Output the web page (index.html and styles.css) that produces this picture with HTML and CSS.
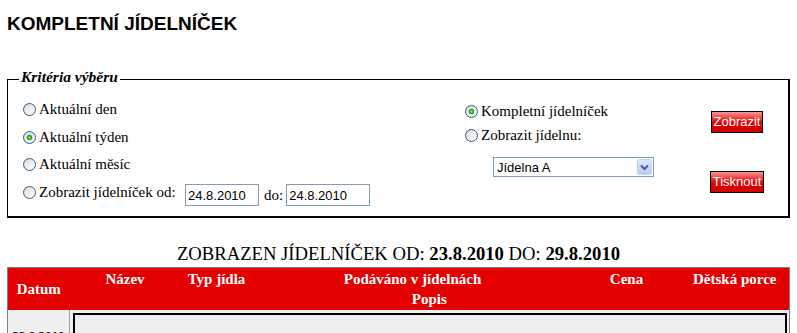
FILE: index.html
```html
<!DOCTYPE html>
<html lang="cs">
<head>
<meta charset="utf-8">
<title>Kompletní jídelníček</title>
<link rel="stylesheet" href="styles.css">
</head>
<body>
<div class="page">
  <h1 class="title">KOMPLETNÍ JÍDELNÍČEK</h1>
  <fieldset class="criteria">
    <legend class="criteria-legend">Kritéria výběru</legend>
    <div class="criteria-grid">
      <div class="col-period">
        <label class="row"><input type="radio" name="period" class="radio">Aktuální den</label>
        <label class="row"><input type="radio" name="period" class="radio" checked>Aktuální týden</label>
        <label class="row"><input type="radio" name="period" class="radio">Aktuální měsíc</label>
        <div class="row">
          <label class="range-label"><input type="radio" name="period" class="radio">Zobrazit jídelníček od:</label>
          <div class="range-inputs">
            <input type="text" class="date date-from" value="24.8.2010">
            <span class="range-do">do:</span>
            <input type="text" class="date date-to" value="24.8.2010">
          </div>
        </div>
      </div>
      <div class="col-place">
        <label class="row-sm"><input type="radio" name="place" class="radio" checked>Kompletní jídelníček</label>
        <label class="row-sm"><input type="radio" name="place" class="radio">Zobrazit jídelnu:</label>
        <div class="select-wrap">
          <select class="select"><option>Jídelna A</option></select>
          <span class="select-btn"><svg width="9" height="7" viewBox="0 0 9 7"><path d="M1 1.5 L4.5 5 L8 1.5" fill="none" stroke="#4d6185" stroke-width="2"/></svg></span>
        </div>
      </div>
      <div class="col-actions">
        <button type="button" class="btn btn-show">Zobrazit</button>
        <button type="button" class="btn btn-print">Tisknout</button>
      </div>
    </div>
  </fieldset>
  <h2 class="range-title">ZOBRAZEN JÍDELNÍČEK OD: <b>23.8.2010</b> DO: <b>29.8.2010</b></h2>
  <table class="menu">
    <colgroup>
      <col class="c-date"><col class="c-name"><col class="c-type"><col class="c-where"><col class="c-price"><col>
    </colgroup>
    <thead>
      <tr>
        <th rowspan="2" class="th-date">Datum</th>
        <th>Název</th>
        <th>Typ jídla</th>
        <th>Podáváno v jídelnách</th>
        <th>Cena</th>
        <th>Dětská porce</th>
      </tr>
      <tr><th colspan="5" class="th-desc">Popis</th></tr>
    </thead>
    <tbody>
      <tr>
        <td class="td-date">23.8.2010</td>
        <td colspan="5" class="td-day"><div class="day-box"></div></td>
      </tr>
    </tbody>
  </table>
</div>
</body>
</html>
```
FILE: styles.css
```css
html { overflow: hidden; }
body {
  margin: 0;
  background: #fff;
  color: #000;
  font-family: "Liberation Serif", "Times New Roman", serif;
  font-size: 15px;
}
.page { padding: 0 7px; }

.title {
  margin: 13px 0 0;
  font: bold 19px/22px "Liberation Sans", Arial, sans-serif;
}

.criteria {
  margin: 34px 0 0;
  padding: 4.5px 0 9.5px 11px;
  border: 1px solid #000;
  border-right-width: 2px;
  border-bottom-width: 2px;
  min-width: 0;
}
.criteria-legend {
  padding: 0 2px 4.5px;
  font: italic bold 15.5px/16px "Liberation Serif", serif;
}
.criteria-grid {
  display: grid;
  grid-template-columns: 442px 234px 76px;
  align-items: start;
  margin-left: 4px;
}

.col-period { margin-top: 2px; }
.row {
  display: flex;
  align-items: center;
  height: 27.6px;
  font-family: "Liberation Serif", "Times New Roman", serif;
}
.row-sm {
  display: flex;
  align-items: center;
  height: 24px;
  font-family: "Liberation Serif", "Times New Roman", serif;
}
.radio {
  appearance: none;
  -webkit-appearance: none;
  flex: none;
  width: 13px;
  height: 13px;
  margin: 0 3px 0 0;
  border: 1px solid #2c5a8e;
  border-radius: 50%;
  background: linear-gradient(135deg, #d6d6d0 0%, #ededea 45%, #ffffff 100%);
}
.radio:checked {
  background:
    radial-gradient(circle, #a8f0a8 0, #3cbd3c 1.2px, #21a121 2.4px, rgba(33,161,33,0) 3.2px),
    linear-gradient(135deg, #d6d6d0 0%, #ededea 45%, #ffffff 100%);
}
.range-label {
  display: flex;
  align-items: center;
  flex: none;
  width: 162px;
}
.range-inputs {
  display: flex;
  align-items: baseline;
  margin-top: 5px;
}
.date {
  box-sizing: border-box;
  height: 22px;
  margin: 0;
  padding: 0 2px;
  border: 1px solid #7f9db9;
  font: 13px "Liberation Sans", Arial, sans-serif;
  color: #000;
}
.date-from { width: 74px; }
.date-to { width: 84px; }
.range-do { margin: 0 3px 0 5px; }

.col-place { margin-top: 5px; }
.select-wrap {
  position: relative;
  width: 161px;
  height: 20px;
  margin: 10px 0 0 28px;
}
.select {
  appearance: none;
  -webkit-appearance: none;
  box-sizing: border-box;
  width: 100%;
  height: 100%;
  margin: 0;
  padding: 0 0 0 3px;
  border: 1px solid #7f9db9;
  border-radius: 0;
  background: #fff;
  color: #000;
  font: 13px "Liberation Sans", Arial, sans-serif;
}
.select-btn {
  position: absolute;
  right: 2px;
  top: 2px;
  box-sizing: border-box;
  width: 15px;
  height: 16px;
  border: 1px solid #c3d3fd;
  border-radius: 2px;
  background: linear-gradient(#dce7fe, #b6cbf6);
  display: flex;
  align-items: center;
  justify-content: center;
}

.col-actions {
  display: flex;
  flex-direction: column;
  align-items: center;
}
.btn {
  box-sizing: border-box;
  height: 22px;
  margin: 0;
  padding: 0 2px;
  border: 1px solid #000;
  border-radius: 0;
  background: linear-gradient(#f59a9a 0%, #ec4040 30%, #e00000 55%, #d00000 100%);
  color: #fff;
  font: 13px/20px "Liberation Sans", Arial, sans-serif;
}
.btn-show { margin-top: 17px; }
.btn-print { margin-top: 38px; }

.range-title {
  margin: 25px 0 0;
  font-size: 18.67px;
  font-weight: normal;
  line-height: 22px;
  text-align: center;
}

.menu {
  margin-top: 2px;
  width: 783px;
  table-layout: fixed;
  border-collapse: collapse;
  border: 1px solid #808080;
}
.c-date { width: 62px; }
.c-name { width: 111px; }
.c-type { width: 72px; }
.c-where { width: 320px; }
.c-price { width: 108px; }
.menu th {
  padding: 3px 2px 1px;
  background: #e30000;
  color: #fff;
  font: bold 15px/17px "Liberation Serif", serif;
  text-align: center;
  vertical-align: top;
  white-space: nowrap;
}
.menu .th-date { vertical-align: middle; }
.menu .th-desc { padding: 2px 2px 2px; }
.td-date {
  padding: 17px 0 0;
  background: #efefef;
  border-right: 1px solid #a0a0a0;
  font: bold 13px/17px "Liberation Serif", serif;
  text-align: center;
  vertical-align: top;
}
.td-day {
  padding: 3px 2px 0 3px;
  background: #f0f0f0;
}
.day-box {
  height: 80px;
  border: 2px solid #000;
  background: #efefef;
}
```
